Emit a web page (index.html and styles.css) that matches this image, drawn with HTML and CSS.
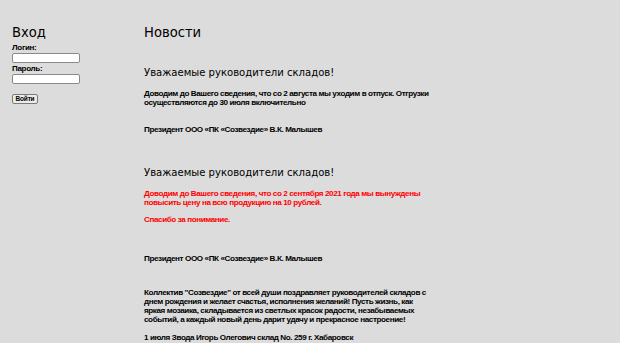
FILE: index.html
```html
<!DOCTYPE html>
<html lang="ru">
<head>
<meta charset="utf-8">
<title>Новости</title>
<link rel="stylesheet" href="styles.css">
</head>
<body>
<div class="page">
  <aside class="login">
    <h1 class="login-title">Вход</h1>
    <form class="login-form">
      <label class="field-label">Логин:</label>
      <input class="field" type="text">
      <label class="field-label">Пароль:</label>
      <input class="field" type="password">
      <button class="btn" type="button">Войти</button>
    </form>
  </aside>
  <main class="news">
    <h1 class="news-title">Новости</h1>
    <article class="item">
      <h2 class="item-title">Уважаемые руководители складов!</h2>
      <p class="text">Доводим до Вашего сведения, что со 2 августа мы уходим в отпуск. Отгрузки осуществляются до 30 июля включительно</p>
      <p class="text sign">Президент ООО «ПК «Созвездие» В.К. Малышев</p>
    </article>
    <article class="item item2">
      <h2 class="item-title">Уважаемые руководители складов!</h2>
      <p class="text red">Доводим до Вашего сведения, что со 2 сентября 2021 года мы вынуждены повысить цену на всю продукцию на 10 рублей.</p>
      <p class="text red thanks">Спасибо за понимание.</p>
      <p class="text sign2">Президент ООО «ПК «Созвездие» В.К. Малышев</p>
    </article>
    <article class="item3">
      <p class="text">Коллектив "Созвездие" от всей души поздравляет руководителей складов с днем рождения и желает счастья, исполнения желаний! Пусть жизнь, как яркая мозаика, складывается из светлых красок радости, незабываемых событий, а каждый новый день дарит удачу и прекрасное настроение!</p>
      <p class="text date">1 июля Звода Игорь Олегович склад No. 259 г. Хабаровск</p>
    </article>
  </main>
</div>
</body>
</html>
```
FILE: styles.css
```css
html, body {
  margin: 0;
  padding: 0;
  background: #dcdcdc;
  overflow: hidden;
}
body {
  font-family: "Liberation Sans", Arial, sans-serif;
  color: #000;
}
.page {
  display: flex;
  padding: 0 12px;
}
.login {
  width: 132px;
  flex: none;
}
.login-title,
.news-title {
  font-family: "DejaVu Sans Condensed", "DejaVu Sans", sans-serif;
  font-weight: normal;
  font-size: 14.6px;
  line-height: 18px;
  margin: 23px 0 0;
}
.login-form {
  display: flex;
  flex-direction: column;
  align-items: flex-start;
}
.field-label {
  font-size: 8px;
  font-weight: bold;
  letter-spacing: -0.3px;
  line-height: 9px;
  margin-top: 2px;
}
.field-label + .field {
  margin-top: 1px;
}
.field + .field-label {
  margin-top: 1px;
}
.field {
  box-sizing: border-box;
  width: 68px;
  height: 10px;
  padding: 0 2px;
  border: 1px solid #8a8a8a;
  border-radius: 2px;
  background: #fff;
  font-size: 7px;
}
.btn {
  box-sizing: border-box;
  margin-top: 10px;
  width: 26px;
  height: 10px;
  padding: 0;
  font-family: "Liberation Sans", Arial, sans-serif;
  font-size: 6.5px;
  font-weight: bold;
  letter-spacing: -0.2px;
  line-height: 8px;
  color: #000;
  border: 1px solid #7a7a7a;
  border-radius: 2px;
  background: #ececec;
}
.news {
  flex: 1;
}
.item-title {
  font-family: "DejaVu Sans Condensed", sans-serif;
  font-weight: normal;
  font-size: 11.2px;
  line-height: 14px;
  margin: 25px 0 0;
}
.item2 .item-title {
  margin-top: 32px;
}
.text {
  font-size: 8.1px;
  font-weight: bold;
  letter-spacing: -0.4px;
  line-height: 9px;
  margin: 9px 0 0;
  width: 287px;
}
.item2 .text.red {
  margin-top: 8.5px;
}
.item2 .text.thanks {
  margin-top: 8px;
}
.sign {
  margin-top: 18px;
}
.sign2 {
  margin-top: 30px;
}
.red {
  color: #ff0000;
}
.item3 {
  margin-top: 25.5px;
}
.item3 .text {
  margin-top: 0;
}
.item3 .date {
  margin-top: 8.5px;
}
```
